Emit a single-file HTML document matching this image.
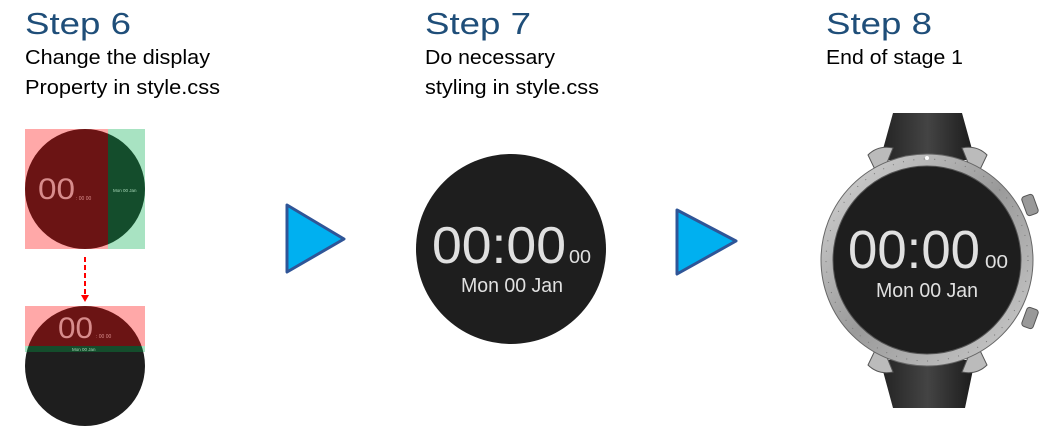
<!DOCTYPE html>
<html><head><style>
body{margin:0;width:1053px;height:433px;background:#fff;position:relative;overflow:hidden;font-family:"Liberation Sans","DejaVu Sans",sans-serif}
</style></head><body>
<svg width="1053" height="433" style="position:absolute;left:0;top:0" font-family="Liberation Sans, DejaVu Sans, sans-serif">
<defs>
<clipPath id="c1"><circle cx="85" cy="189" r="60"/></clipPath>
<clipPath id="c2"><circle cx="85" cy="366" r="60"/></clipPath>
<linearGradient id="st" x1="0" x2="1"><stop offset="0" stop-color="#222"/><stop offset=".5" stop-color="#444"/><stop offset="1" stop-color="#1a1a1a"/></linearGradient>
<linearGradient id="bz" x1="0" y1="0" x2="1" y2="1"><stop offset="0" stop-color="#d8d8d8"/><stop offset=".5" stop-color="#9a9a9a"/><stop offset="1" stop-color="#cfcfcf"/></linearGradient>
</defs>
<g fill="#1f4e79" font-size="31">
<text x="25" y="34" textLength="106" lengthAdjust="spacingAndGlyphs">Step 6</text>
<text x="425" y="34" textLength="106" lengthAdjust="spacingAndGlyphs">Step 7</text>
<text x="826" y="34" textLength="106" lengthAdjust="spacingAndGlyphs">Step 8</text>
</g>
<g fill="#000" font-size="20">
<text x="25" y="64" textLength="185" lengthAdjust="spacingAndGlyphs">Change the display</text>
<text x="25" y="94" textLength="195" lengthAdjust="spacingAndGlyphs">Property in style.css</text>
<text x="425" y="64" textLength="130" lengthAdjust="spacingAndGlyphs">Do necessary</text>
<text x="425" y="94" textLength="174" lengthAdjust="spacingAndGlyphs">styling in style.css</text>
<text x="826" y="64" textLength="137" lengthAdjust="spacingAndGlyphs">End of stage 1</text>
</g>
<rect x="25" y="129" width="83" height="120" fill="#ffa8a8"/>
<rect x="108" y="129" width="37" height="120" fill="#a8e3c2"/>
<g clip-path="url(#c1)"><rect x="25" y="129" width="83" height="120" fill="#6b1414"/><rect x="108" y="129" width="37" height="120" fill="#144d2c"/></g>
<text x="38" y="199" font-size="30" fill="#d88c8c" textLength="37" lengthAdjust="spacingAndGlyphs">00</text>
<text x="76" y="200" font-size="5" fill="#d88c8c">: 00 00</text>
<text x="113" y="192" font-size="4.5" fill="#a8d8b8">Mon 00 Jan</text>
<line x1="85" y1="257" x2="85" y2="296" stroke="#f00" stroke-width="2" stroke-dasharray="5,3"/>
<path d="M81 295 L89 295 L85 302 Z" fill="#f00"/>
<circle cx="85" cy="366" r="60" fill="#1e1e1e"/>
<rect x="25" y="306" width="120" height="40" fill="#ffa8a8"/>
<rect x="25" y="346" width="120" height="6" fill="#a8e3c2"/>
<g clip-path="url(#c2)"><rect x="25" y="306" width="120" height="40" fill="#6b1414"/><rect x="25" y="346" width="120" height="6" fill="#144d2c"/></g>
<text x="58" y="338" font-size="30" fill="#d88c8c" textLength="35" lengthAdjust="spacingAndGlyphs">00</text>
<text x="96" y="338" font-size="5" fill="#d88c8c">: 00 00</text>
<text x="72" y="351" font-size="4.5" fill="#a8d8b8">Mon 00 Jan</text>
<path d="M287 205 L344 239 L287 272 Z" fill="#00b0f0" stroke="#2f5597" stroke-width="3" stroke-linejoin="round"/>
<path d="M677 210 L736 241 L677 274 Z" fill="#00b0f0" stroke="#2f5597" stroke-width="3" stroke-linejoin="round"/>
<circle cx="511" cy="249" r="95" fill="#1e1e1e"/>
<text x="432" y="263" font-size="52" fill="#e0e0e0" textLength="134" lengthAdjust="spacingAndGlyphs">00:00</text>
<text x="569" y="263" font-size="18" fill="#e0e0e0" textLength="22" lengthAdjust="spacingAndGlyphs">00</text>
<text x="461" y="292" font-size="20" fill="#e0e0e0" textLength="102" lengthAdjust="spacingAndGlyphs">Mon 00 Jan</text>
<path d="M893 113 L962 113 L975 160 L880 160 Z" fill="url(#st)"/>
<path d="M880 360 L975 360 L965 408 L893 408 Z" fill="url(#st)"/>
<path d="M868 155 Q878 145 893 148 L880 180 Z M987 155 Q977 145 962 148 L975 180 Z M868 365 Q878 375 893 372 L880 340 Z M987 365 Q977 375 962 372 L975 340 Z" fill="#bbb" stroke="#555"/>
<rect x="1024" y="195" width="12" height="20" rx="3" fill="#999" stroke="#555" transform="rotate(-20 1030 205)"/>
<rect x="1024" y="308" width="12" height="20" rx="3" fill="#999" stroke="#555" transform="rotate(20 1030 318)"/>
<circle cx="927" cy="260" r="106" fill="url(#bz)" stroke="#666"/>
<circle cx="927" cy="260" r="101" fill="none" stroke="#777" stroke-width="1" stroke-dasharray="1,9.5"/>
<circle cx="927" cy="260" r="94" fill="#1e1e1e" stroke="#555"/>
<circle cx="927" cy="158" r="2" fill="#fff"/>
<text x="848" y="268" font-size="54" fill="#e0e0e0" textLength="132" lengthAdjust="spacingAndGlyphs">00:00</text>
<text x="985" y="268" font-size="18" fill="#e0e0e0" textLength="23" lengthAdjust="spacingAndGlyphs">00</text>
<text x="876" y="297" font-size="20" fill="#e0e0e0" textLength="102" lengthAdjust="spacingAndGlyphs">Mon 00 Jan</text>
</svg>
</body></html>
